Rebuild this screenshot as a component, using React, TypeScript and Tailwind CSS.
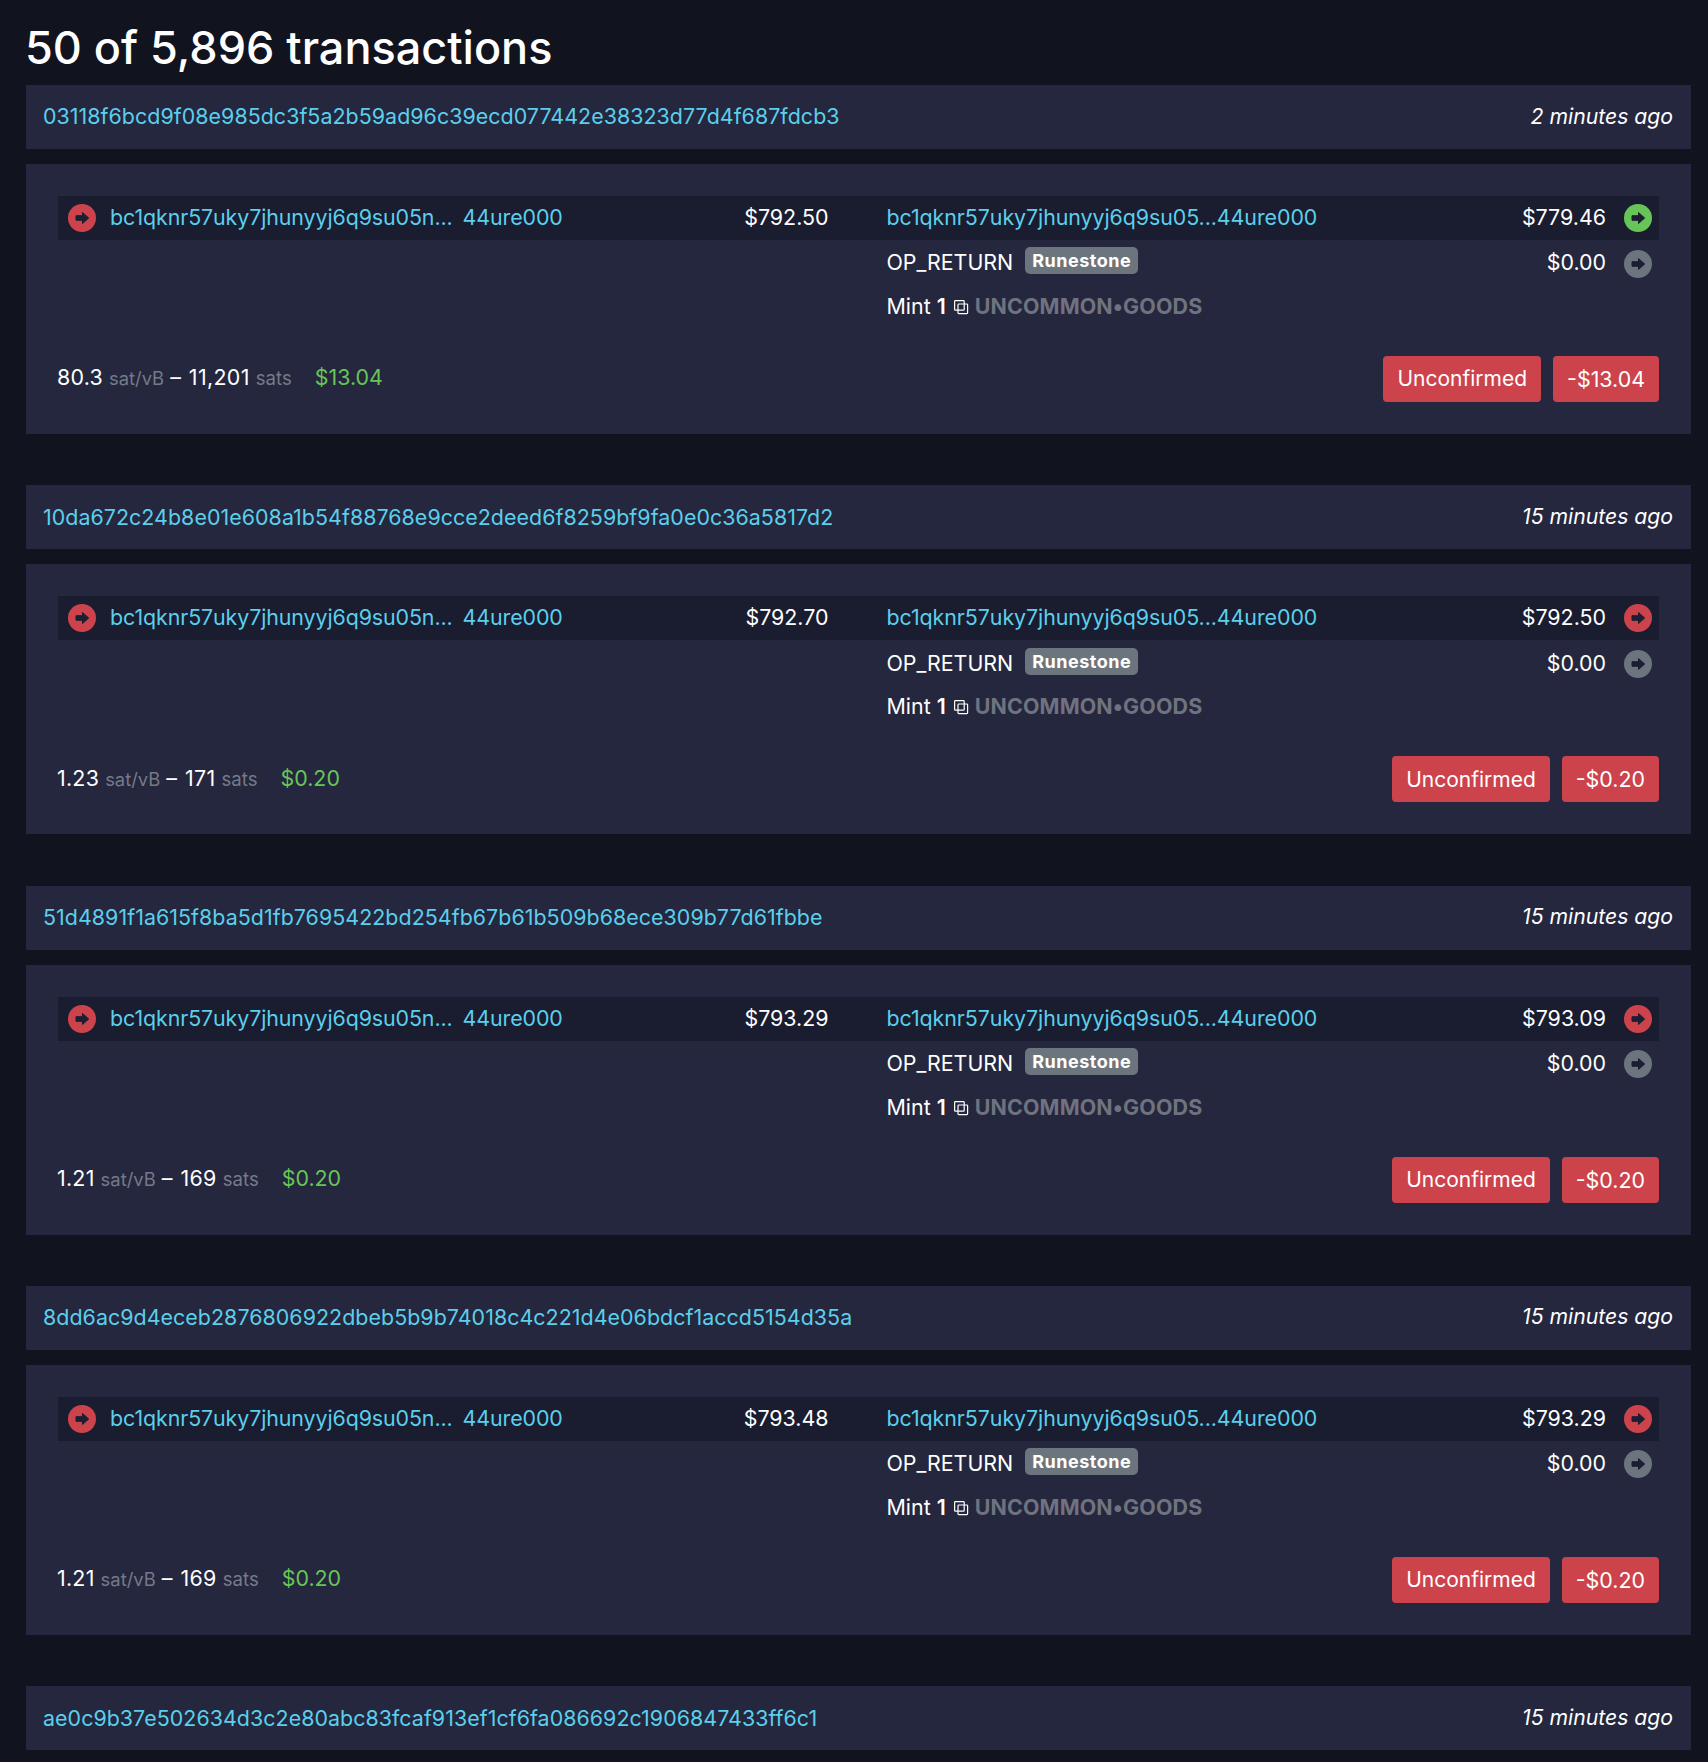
import React from 'react';

interface Tx {
  txid: string;
  time: string;
  inAmount: string;
  outAmount: string;
  outColor: string;
  rate: string;
  fee: string;
  feeUsd: string;
}

const transactions: Tx[] = [
  {
    txid: '03118f6bcd9f08e985dc3f5a2b59ad96c39ecd077442e38323d77d4f687fdcb3',
    time: '2 minutes ago',
    inAmount: '$792.50',
    outAmount: '$779.46',
    outColor: 'text-[#67c557]',
    rate: '80.3',
    fee: '11,201',
    feeUsd: '$13.04',
  },
  {
    txid: '10da672c24b8e01e608a1b54f88768e9cce2deed6f8259bf9fa0e0c36a5817d2',
    time: '15 minutes ago',
    inAmount: '$792.70',
    outAmount: '$792.50',
    outColor: 'text-[#cd434c]',
    rate: '1.23',
    fee: '171',
    feeUsd: '$0.20',
  },
  {
    txid: '51d4891f1a615f8ba5d1fb7695422bd254fb67b61b509b68ece309b77d61fbbe',
    time: '15 minutes ago',
    inAmount: '$793.29',
    outAmount: '$793.09',
    outColor: 'text-[#cd434c]',
    rate: '1.21',
    fee: '169',
    feeUsd: '$0.20',
  },
  {
    txid: '8dd6ac9d4eceb2876806922dbeb5b9b74018c4c221d4e06bdcf1accd5154d35a',
    time: '15 minutes ago',
    inAmount: '$793.48',
    outAmount: '$793.29',
    outColor: 'text-[#cd434c]',
    rate: '1.21',
    fee: '169',
    feeUsd: '$0.20',
  },
];

const ArrowIcon: React.FC<{ color: string }> = ({ color }) => (
  <svg viewBox="0 0 28 28" className={`w-7 h-7 shrink-0 mt-[2px] ${color}`}>
    <circle cx="14" cy="14" r="14" fill="currentColor" />
    <path
      d="M8 11.7h6.5V8.5l6.2 5.5-6.2 5.5v-3.2H8z"
      fill="#1c1e32"
      stroke="#1c1e32"
      strokeWidth="1"
      strokeLinejoin="round"
    />
  </svg>
);

const CopyIcon: React.FC = () => (
  <svg viewBox="0 0 16 16" className="w-4 h-4 mt-[2px] ml-[7px] mr-[6px] shrink-0" fill="none" stroke="currentColor" strokeWidth="1.2">
    <rect x="1.6" y="1.6" width="9.6" height="9.6" rx="0.8" />
    <rect x="5" y="5" width="9.6" height="9.6" rx="0.8" />
  </svg>
);

const Hash: React.FC<{ right?: boolean }> = ({ right }) =>
  right ? (
    <span className="text-[#5bcfec] tracking-[-0.07px]">bc1qknr57uky7jhunyyj6q9su05...44ure000</span>
  ) : (
    <span className="text-[#5bcfec] tracking-[-0.1px] flex gap-[10px]">
      <span>bc1qknr57uky7jhunyyj6q9su05n...</span>
      <span>44ure000</span>
    </span>
  );

const TxHeader: React.FC<{ txid: string; time: string }> = ({ txid, time }) => (
  <div className="h-16 pb-px bg-[#24273e] flex items-center justify-between pl-[17px] pr-[18px]">
    <span className="text-[#5bcfec] tracking-[0.05px]">{txid}</span>
    <span className="italic text-[21.2px]">{time}</span>
  </div>
);

const TxBlock: React.FC<{ tx: Tx }> = ({ tx }) => (
  <div className="mb-[51.3px]">
    <TxHeader txid={tx.txid} time={tx.time} />
    <div className="mt-[15px] bg-[#24273e] h-[270px] pt-8 px-8">
      <div className="flex">
        <div className="w-1/2">
          <div className="h-11 pb-[2px] bg-[#1a1c2f] flex items-center pl-[10px] pr-[30px]">
            <ArrowIcon color="text-[#cd434c]" />
            <span className="ml-[14px] flex-1">
              <Hash />
            </span>
            <span>{tx.inAmount}</span>
          </div>
        </div>
        <div className="w-1/2">
          <div className="h-11 pb-[2px] bg-[#1a1c2f] flex items-center pl-[28px] pr-[7px]">
            <span className="flex-1">
              <Hash right />
            </span>
            <span>{tx.outAmount}</span>
            <span className="ml-[18px]">
              <ArrowIcon color={tx.outColor} />
            </span>
          </div>
          <div className="h-[45px] flex items-center pl-[28px] pr-[7px]">
            <span className="flex-1 flex items-center">
              OP_RETURN
              <span className="ml-3 -mt-[3px] h-[27px] px-[7px] flex items-center rounded-[5px] bg-[#6c757d] text-[18px] tracking-[0.5px] font-bold">
                Runestone
              </span>
            </span>
            <span>$0.00</span>
            <span className="ml-[18px]">
              <ArrowIcon color="text-[#6c757d]" />
            </span>
          </div>
          <div className="h-11 pb-[2px] flex items-center pl-[28px]">
            Mint <span className="font-semibold ml-[6px]">1</span>
            <CopyIcon />
            <span className="font-bold tracking-[0.15px] text-[#70737f]">UNCOMMON•GOODS</span>
          </div>
        </div>
      </div>
      <div className="mt-[27px] flex items-center justify-between">
        <div className="-mt-[3px] -ml-px flex items-baseline">
          <span className="tracking-[0.25px]">{tx.rate}</span>
          <span className="ml-[6px] text-[18.4px] text-[#757a88]">sat/vB</span>
          <span className="ml-[6px]">–</span>
          <span className="ml-[8px] tracking-[0.35px]">{tx.fee}</span>
          <span className="ml-[6px] text-[18.6px] text-[#757a88]">sats</span>
          <span className="ml-[23px] text-[#67c557]">{tx.feeUsd}</span>
        </div>
        <div className="flex gap-3">
          <span className="h-[46px] px-[14px] flex items-center rounded-[4px] bg-[#cd434c] text-[21px]">Unconfirmed</span>
          <span className="h-[46px] px-[14px] flex items-center rounded-[4px] bg-[#cd434c]">-{tx.feeUsd}</span>
        </div>
      </div>
    </div>
  </div>
);

const App: React.FC = () => (
  <div className="h-[1762px] overflow-hidden bg-[#11131f] text-white text-[21.4px] font-['Inter',sans-serif] pl-[26px] pr-[17px]">
    <h1 className="h-[85px] pt-[19px] -ml-px text-[45px] leading-[58px] font-medium">50 of 5,896 transactions</h1>
    {transactions.map((tx) => (
      <TxBlock key={tx.txid} tx={tx} />
    ))}
    <TxHeader txid="ae0c9b37e502634d3c2e80abc83fcaf913ef1cf6fa086692c1906847433ff6c1" time="15 minutes ago" />
  </div>
);

export default App;
